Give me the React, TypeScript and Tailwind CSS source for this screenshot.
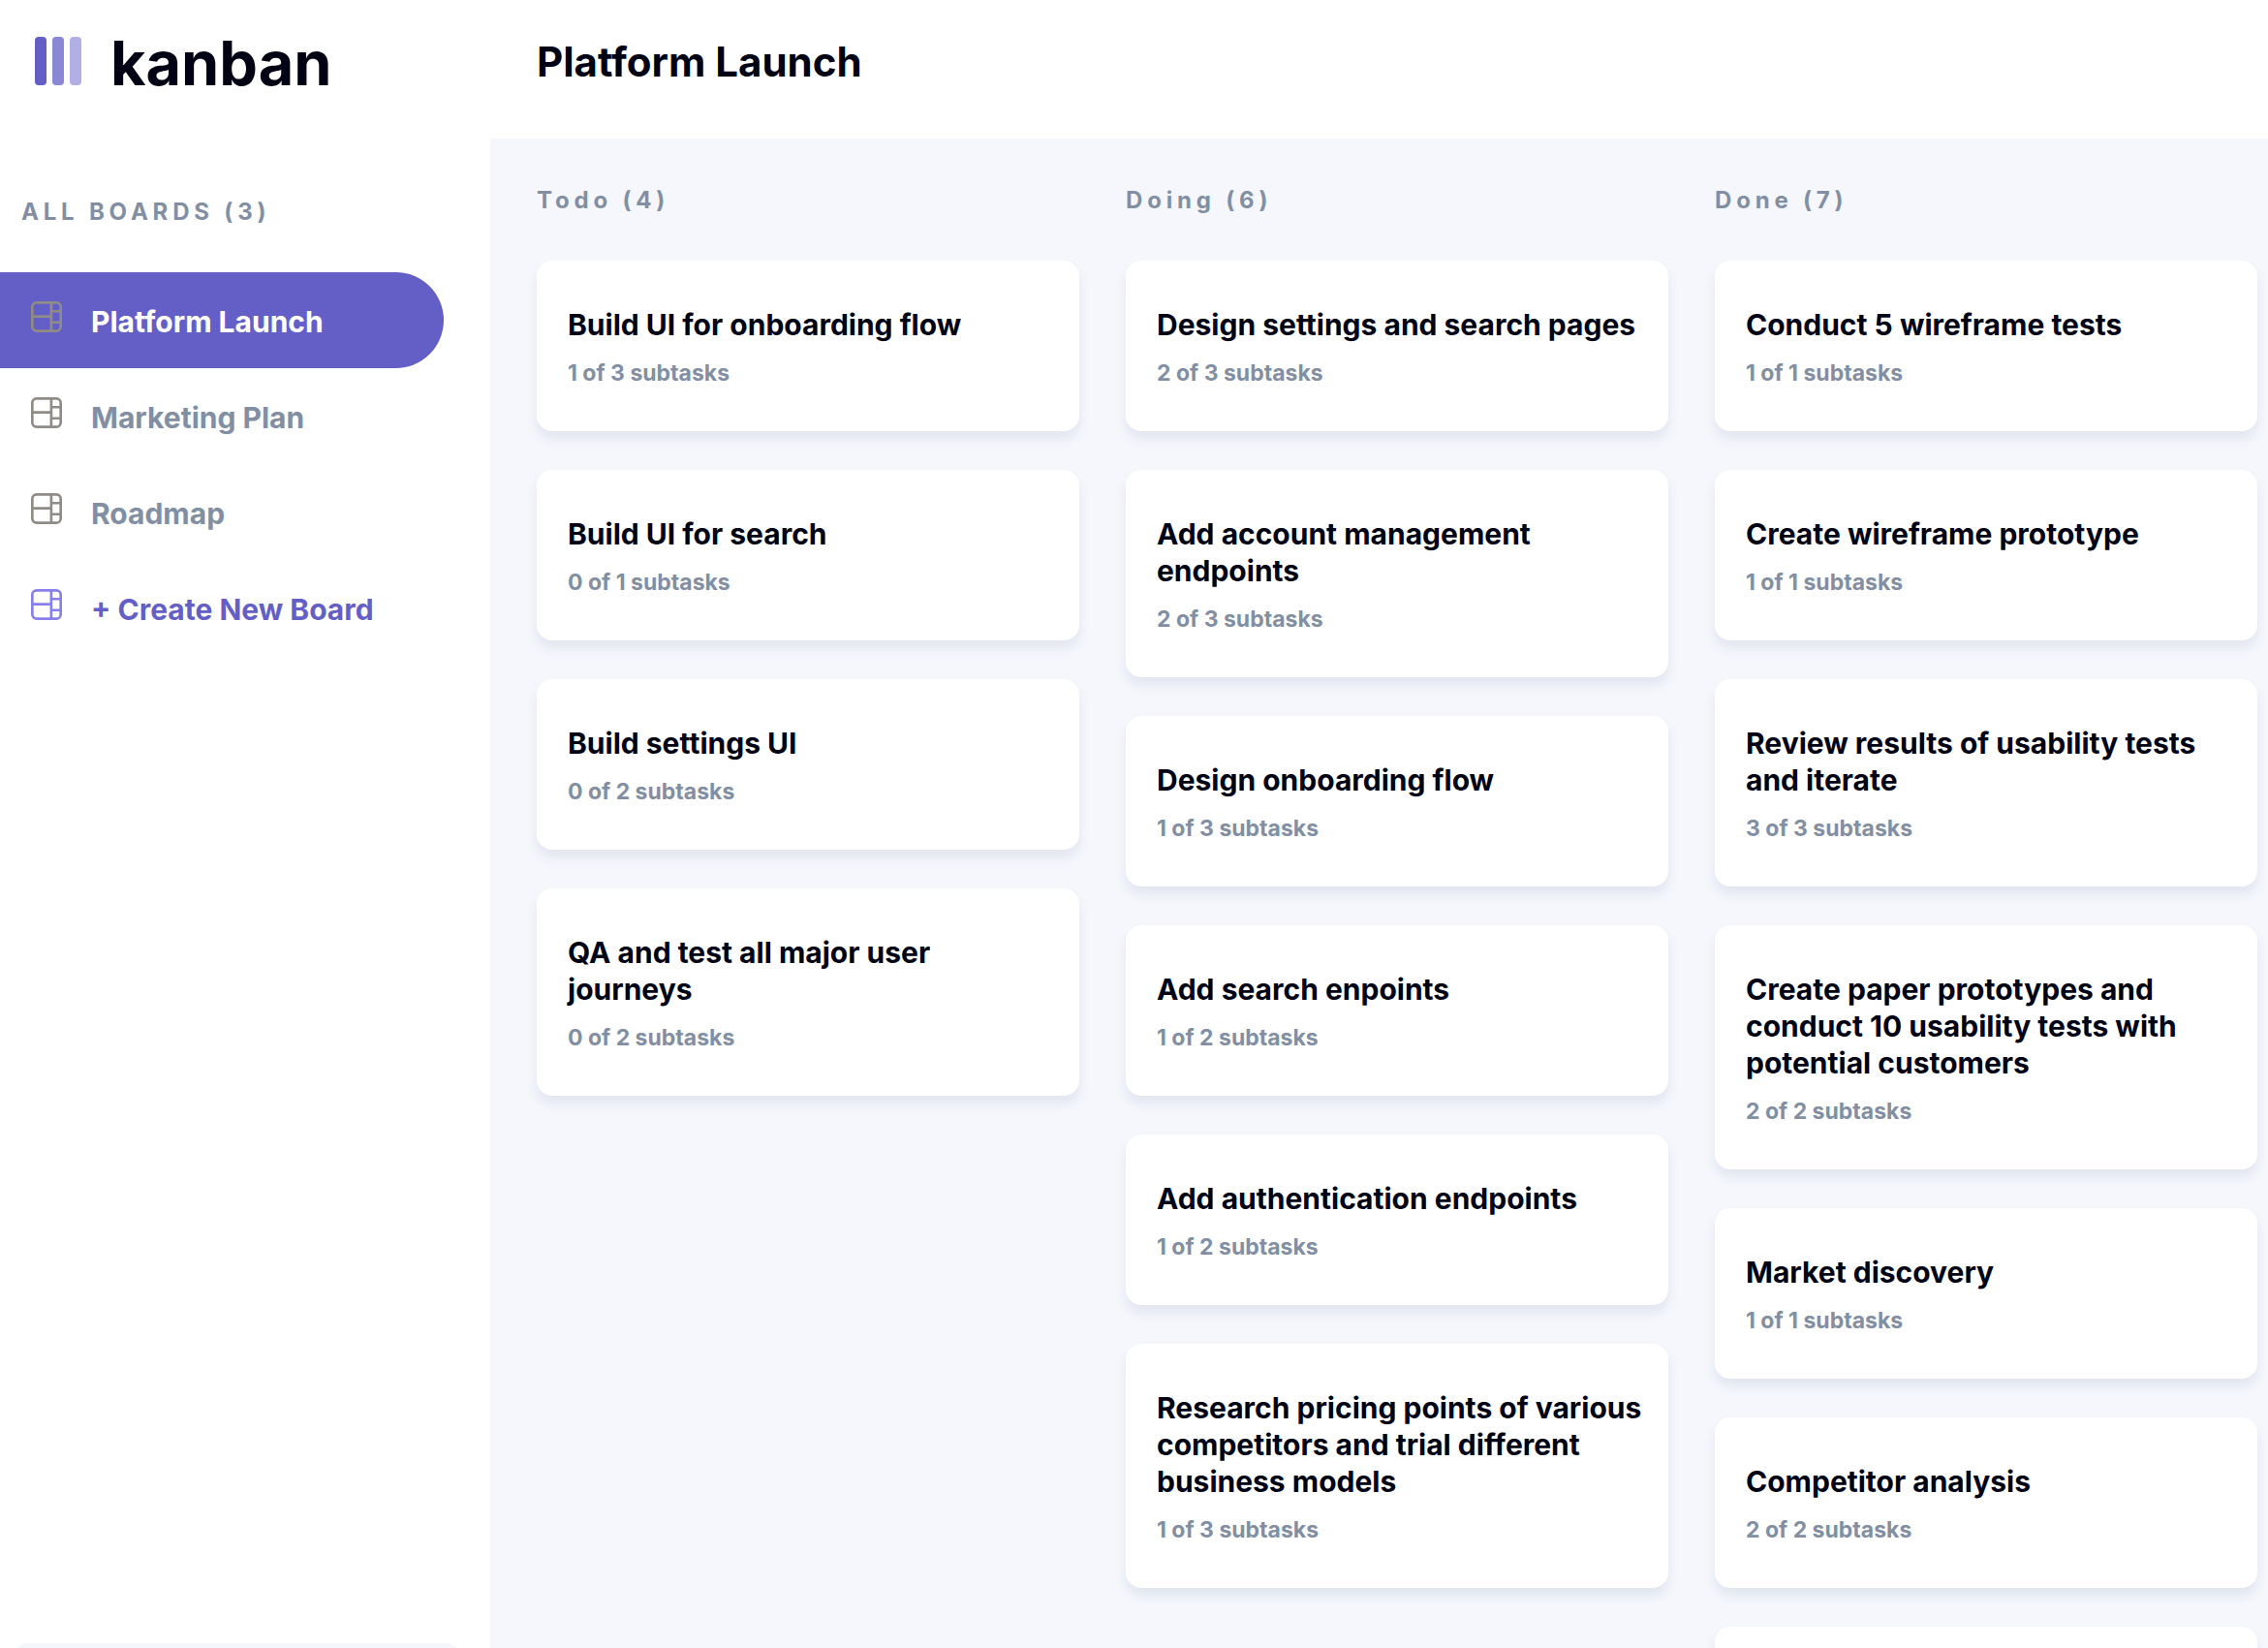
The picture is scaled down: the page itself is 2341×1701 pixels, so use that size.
const boards = ['Platform Launch', 'Marketing Plan', 'Roadmap'];

type Task = { title: string; done: number; total: number };
type Column = { name: string; count: number; tasks: Task[] };

const columns: Column[] = [
  {
    name: 'Todo',
    count: 4,
    tasks: [
      { title: 'Build UI for onboarding flow', done: 1, total: 3 },
      { title: 'Build UI for search', done: 0, total: 1 },
      { title: 'Build settings UI', done: 0, total: 2 },
      { title: 'QA and test all major user journeys', done: 0, total: 2 },
    ],
  },
  {
    name: 'Doing',
    count: 6,
    tasks: [
      { title: 'Design settings and search pages', done: 2, total: 3 },
      { title: 'Add account management endpoints', done: 2, total: 3 },
      { title: 'Design onboarding flow', done: 1, total: 3 },
      { title: 'Add search enpoints', done: 1, total: 2 },
      { title: 'Add authentication endpoints', done: 1, total: 2 },
      {
        title: 'Research pricing points of various competitors and trial different business models',
        done: 1,
        total: 3,
      },
    ],
  },
  {
    name: 'Done',
    count: 7,
    tasks: [
      { title: 'Conduct 5 wireframe tests', done: 1, total: 1 },
      { title: 'Create wireframe prototype', done: 1, total: 1 },
      { title: 'Review results of usability tests and iterate', done: 3, total: 3 },
      {
        title: 'Create paper prototypes and conduct 10 usability tests with potential customers',
        done: 2,
        total: 2,
      },
      { title: 'Market discovery', done: 1, total: 1 },
      { title: 'Competitor analysis', done: 2, total: 2 },
    ],
  },
];

function BoardIcon({ className }: { className: string }) {
  return (
    <svg viewBox="0 0 16 16" className={`size-8 shrink-0 ${className}`} fill="currentColor" aria-hidden="true">
      <path d="M0 2.889A2.889 2.889 0 0 1 2.889 0H13.11A2.889 2.889 0 0 1 16 2.889V13.11A2.888 2.888 0 0 1 13.111 16H2.89A2.889 2.889 0 0 1 0 13.111V2.89Zm1.333 5.555v4.667c0 .859.697 1.556 1.556 1.556h6.889V8.444H1.333Zm8.445-1.333V1.333h-6.89A1.556 1.556 0 0 0 1.334 2.89V7.11h8.445Zm4.889-1.333H11.11v4.444h3.556V5.778Zm0 5.778H11.11v3.11h2a1.556 1.556 0 0 0 1.556-1.555v-1.555Zm0-7.112V2.89a1.555 1.555 0 0 0-1.556-1.556h-2v3.111h3.556Z" />
    </svg>
  );
}

function Logo() {
  return (
    <div className="flex items-start pt-[38px] pl-9">
      <svg viewBox="0 0 24 25" className="h-[50px] w-12 shrink-0" fill="#635FC7" aria-hidden="true">
        <rect width="6" height="25" rx="2" />
        <rect x="9" width="6" height="25" rx="2" opacity=".75" />
        <rect x="18" width="6" height="25" rx="2" opacity=".5" />
      </svg>
      <span className="ml-[30px] text-[63px] leading-[54px] font-bold">kanban</span>
    </div>
  );
}

function Sidebar() {
  return (
    <aside className="flex w-[506px] shrink-0 flex-col overflow-hidden bg-white">
      <Logo />
      <h2 className="mt-[112px] pl-[22px] text-2xl leading-[30px] font-bold tracking-[0.2em] text-[#828FA3]">
        ALL BOARDS (3)
      </h2>
      <nav className="mt-[47px] flex flex-1 flex-col pr-12">
        {boards.map((name, i) => (
          <button
            key={name}
            type="button"
            className={`flex h-[99px] items-baseline gap-[30px] rounded-r-full pt-[30px] pl-8 text-left text-[30px] leading-[38px] font-bold ${
              i === 0 ? 'bg-[#635FC7] text-white' : 'text-[#828FA3]'
            }`}
          >
            <BoardIcon className="text-[#8F8C87]" />
            {name}
          </button>
        ))}
        <button
          type="button"
          className="flex h-[99px] items-baseline gap-[30px] rounded-r-full pt-[30px] pl-8 text-left text-[30px] leading-[38px] font-bold text-[#635FC7]"
        >
          <BoardIcon className="text-[#8780EC]" />
          + Create New Board
        </button>
      </nav>
      <div className="mr-8 ml-4 h-[5px] overflow-hidden">
        <div className="h-24 rounded-xl bg-[#F5F7FC]" />
      </div>
    </aside>
  );
}

function TaskCard({ task }: { task: Task }) {
  return (
    <button
      type="button"
      className="block w-full rounded-2xl bg-white pt-[47px] pr-6 pb-[45px] pl-8 text-left shadow-[0_8px_12px_rgba(54,78,126,0.1)]"
    >
      <span className="block text-[30px] leading-[38px] font-bold">{task.title}</span>
      <span className="mt-4 block text-[23px] leading-[30px] font-bold text-[#828FA3]">
        {task.done} of {task.total} subtasks
      </span>
    </button>
  );
}

export default function App() {
  return (
    <div className="flex h-screen overflow-hidden bg-[#F5F7FC] font-['Inter',sans-serif] text-[#000112]">
      <Sidebar />
      <div className="flex min-w-0 flex-1 flex-col">
        <header className="h-[143px] shrink-0 bg-white px-12 pt-[39px]">
          <h1 className="text-[42px] leading-[50px] font-bold">Platform Launch</h1>
        </header>
        <main className="flex flex-1 gap-12 overflow-hidden pt-[49px] pl-12">
          {columns.map((column) => (
            <section key={column.name} className="w-[560px] shrink-0">
              <h2 className="text-2xl leading-[30px] font-bold tracking-[0.2em] text-[#828FA3]">
                {column.name} ({column.count})
              </h2>
              <div className="mt-[47px] flex flex-col gap-10">
                {column.tasks.map((task) => (
                  <TaskCard key={task.title} task={task} />
                ))}
                {column.count > column.tasks.length && (
                  <div className="h-44 rounded-2xl bg-white shadow-[0_8px_12px_rgba(54,78,126,0.1)]" />
                )}
              </div>
            </section>
          ))}
        </main>
      </div>
    </div>
  );
}
